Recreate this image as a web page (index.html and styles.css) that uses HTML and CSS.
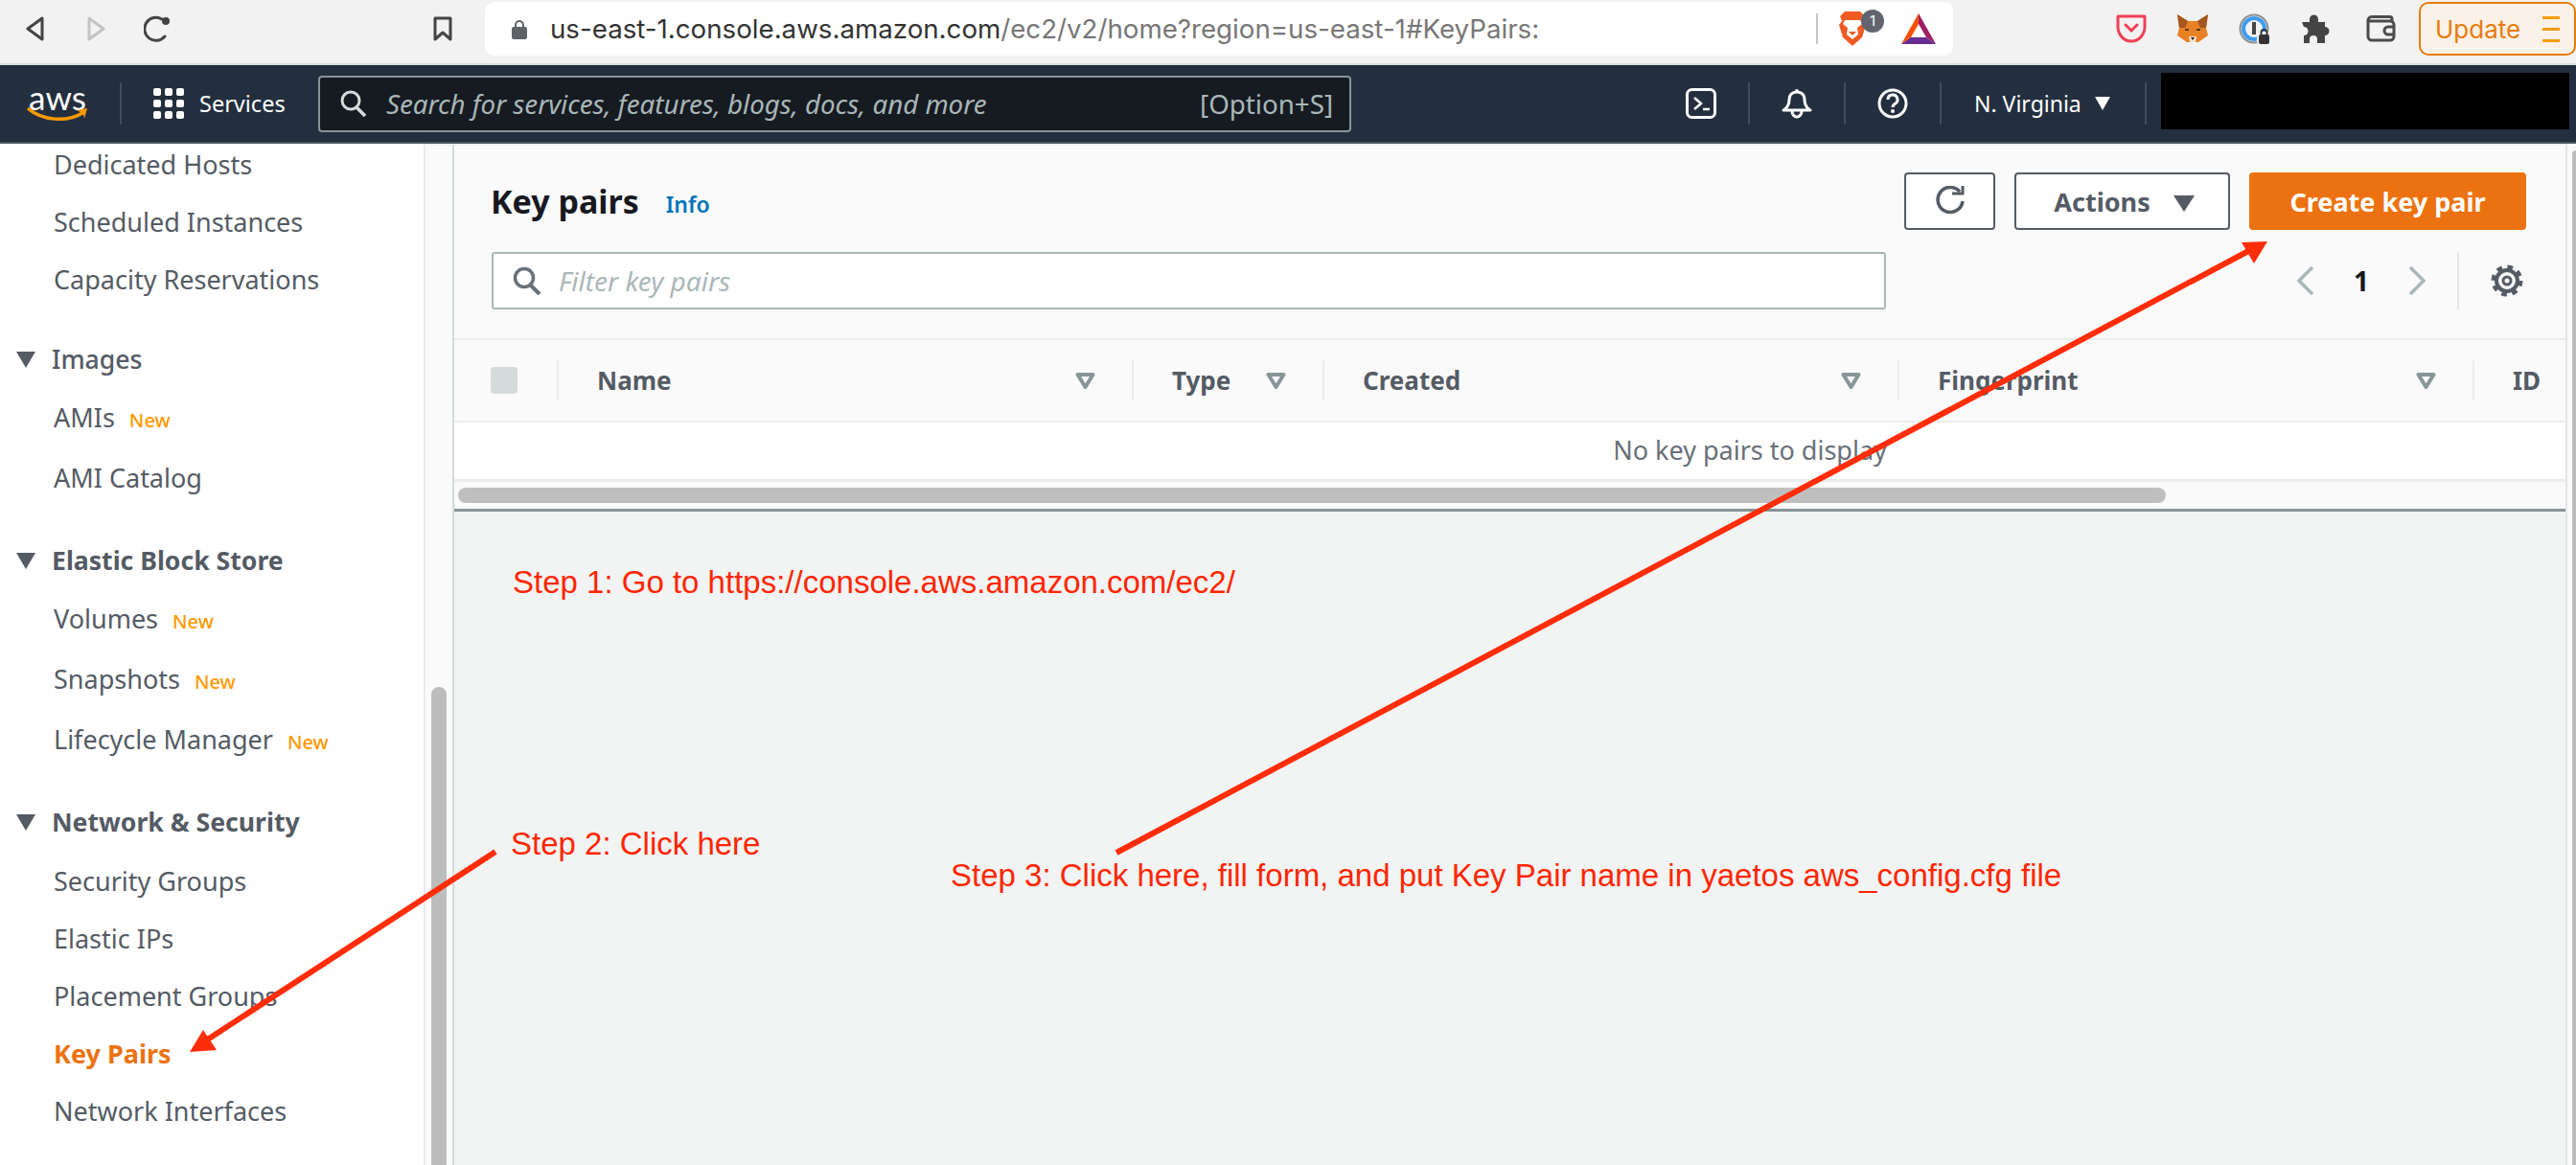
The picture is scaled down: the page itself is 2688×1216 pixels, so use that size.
FILE: index.html
```html
<!DOCTYPE html>
<html>
<head>
    <title>Key pairs | EC2</title>
    <link rel="stylesheet" href="styles.css">
</head>
<body>
    <div class="chrome">
        <svg class="ch-back" width="19" height="26" viewBox="0 0 19 26"><path d="M17 2 L2 13 L17 24 Z" fill="none" stroke="#444" stroke-width="3" stroke-linejoin="round"/></svg>
        <svg class="ch-forward" width="19" height="26" viewBox="0 0 19 26"><path d="M2 2 L17 13 L2 24 Z" fill="none" stroke="#c4c4c4" stroke-width="3" stroke-linejoin="round"/></svg>
        <svg class="ch-reload" width="28" height="28" viewBox="0 0 28 28"><path d="M22 22 A12 12 0 1 1 19 4" fill="none" stroke="#444" stroke-width="3" stroke-linecap="round"/><circle cx="23" cy="6" r="4" fill="#444"/></svg>
        <svg class="ch-bookmark" width="20" height="26" viewBox="0 0 20 26"><path d="M2 2 H18 V24 L10 17 L2 24 Z" fill="none" stroke="#444" stroke-width="3" stroke-linejoin="round"/></svg>
        <div class="urlbar">
            <svg class="lock" width="16" height="21" viewBox="0 0 16 21"><path d="M4 9 V6 a4 4 0 0 1 8 0 V9" fill="none" stroke="#5f6368" stroke-width="2"/><rect x="0" y="8" width="16" height="13" rx="2" fill="#5f6368"/></svg>
            <span class="url"><span class="url-host">us-east-1.console.aws.amazon.com</span>/ec2/v2/home?region=us-east-1#KeyPairs:</span>
            <div class="url-sep"></div>
            <div class="lion">
                <svg width="30" height="36" viewBox="0 0 30 36"><path d="M7 0 H23 L28 5 L26 10 L29 14 L25 27 L15 36 L5 27 L1 14 L4 10 L2 5 Z" fill="#f15a22"/><path d="M7 9 H23 L25 13 L20 17 L21 24 L15 29 L9 24 L10 17 L5 13 Z" fill="#fff"/><path d="M11 21 H19 L15 25 Z" fill="#f15a22"/></svg>
                <span class="lion-badge">1</span>
            </div>
            <svg class="bat" width="36" height="32" viewBox="0 0 36 32"><polygon points="18,0 36,32 26,25 18,11" fill="#9e1f63"/><polygon points="18,0 0,32 10,25 18,11" fill="#ff5000"/><polygon points="10,25 26,25 36,32 0,32" fill="#662d91"/></svg>
        </div>
        <svg class="ext ext-pocket" width="32" height="30" viewBox="0 0 32 30"><path d="M2 2 H30 V13 A14 15 0 0 1 2 13 Z" fill="none" stroke="#ef4056" stroke-width="3" stroke-linejoin="round"/><path d="M10 11 L16 17 L22 11" fill="none" stroke="#ef4056" stroke-width="3" stroke-linecap="round"/></svg>
        <svg class="ext ext-fox" width="32" height="30" viewBox="0 0 32 30"><polygon points="0,0 11,7 21,7 32,0 30,14 32,22 22,29 10,29 0,22 2,14" fill="#e88024"/><polygon points="0,0 11,7 8,14 2,14" fill="#a4561d"/><polygon points="32,0 21,7 24,14 30,14" fill="#a4561d"/><polygon points="12,23 20,23 19,29 13,29" fill="#f3e3d3"/><polygon points="14,24 18,24 16,27" fill="#222"/><rect x="8" y="15" width="4" height="2" fill="#5a3a20"/><rect x="20" y="15" width="4" height="2" fill="#5a3a20"/></svg>
        <svg class="ext ext-onepass" width="32" height="32" viewBox="0 0 32 32"><circle cx="16" cy="16" r="14.5" fill="none" stroke="#8e8e8e" stroke-width="2"/><circle cx="16" cy="16" r="11" fill="none" stroke="#3d9bf0" stroke-width="4"/><rect x="14" y="9" width="4" height="13" fill="#444"/><rect x="19" y="19" width="13" height="13" rx="2" fill="#f2f2f2"/><rect x="21" y="22" width="11" height="10" rx="2" fill="#333"/><path d="M23.5 22 V20 a3 3 0 0 1 6 0 V22" fill="none" stroke="#333" stroke-width="2"/></svg>
        <svg class="ext ext-puzzle" width="30" height="30" viewBox="0 0 30 30"><path d="M0 8 H8 V5 a4.5 4.5 0 0 1 9 0 V8 H24 V13 a4.5 4.5 0 0 1 0 9 V30 H16 V26 a4 4 0 0 0 -8 0 V30 H2 V22 a4.5 4.5 0 0 0 0 -9 Z" fill="#444"/></svg>
        <svg class="ext ext-wallet" width="31" height="28" viewBox="0 0 31 28"><path d="M27 6 V4 a2.5 2.5 0 0 0 -2.5 -2.5 H6 A4 4 0 0 0 2 6 V22 A4 4 0 0 0 6 26 H25 A4 4 0 0 0 29 22 V10 A4 4 0 0 0 25 6 H2" fill="none" stroke="#4a4a4a" stroke-width="3"/><path d="M29 12 H23 a3.5 3.5 0 0 0 0 8 H29" fill="none" stroke="#4a4a4a" stroke-width="3"/></svg>
        <div class="update">
            <span>Update</span>
            <div class="update-menu"><i></i><i></i><i></i></div>
        </div>
    </div>

    <div class="topnav">
        <div class="aws-logo">
            <span class="aws-word">aws</span>
            <svg class="aws-smile" width="64" height="16" viewBox="0 0 64 16"><path d="M1 1 C16 14 42 16 58 6" fill="none" stroke="#f90" stroke-width="3.5"/><path d="M52 3 L63 1 L60 12 C60 8 58 6 52 3 Z" fill="#f90"/></svg>
        </div>
        <div class="nav-sep sep-logo"></div>
        <div class="services">
            <div class="dots"><i></i><i></i><i></i><i></i><i></i><i></i><i></i><i></i><i></i></div>
            <span>Services</span>
        </div>
        <div class="nav-search">
            <svg width="28" height="28" viewBox="0 0 28 28"><circle cx="11" cy="11" r="9" fill="none" stroke="#d5dbdb" stroke-width="3"/><path d="M17 18 L26 27" stroke="#d5dbdb" stroke-width="3.5"/></svg>
            <span class="nav-search-text">Search for services, features, blogs, docs, and more</span>
            <span class="nav-search-key">[Option+S]</span>
        </div>
        <svg class="nav-terminal" width="32" height="32" viewBox="0 0 32 32"><rect x="1.5" y="1.5" width="29" height="29" rx="5" fill="none" stroke="#fff" stroke-width="3"/><path d="M9 10 L16 16 L9 22" fill="none" stroke="#fff" stroke-width="2.5"/><path d="M18 22 H25" stroke="#fff" stroke-width="2.5"/></svg>
        <div class="nav-sep nav-gap"></div>
        <svg class="nav-bell nav-gap" width="32" height="32" viewBox="0 0 32 32"><path d="M2 23 C7 20 8 15 8 12 C8 7 11 4 16 4 C21 4 24 7 24 12 C24 15 25 20 30 23 Z" fill="none" stroke="#fff" stroke-width="3" stroke-linejoin="round"/><circle cx="16" cy="3" r="2" fill="#fff"/><path d="M11 24 a5 6 0 0 0 10 0" fill="none" stroke="#fff" stroke-width="3"/></svg>
        <div class="nav-sep nav-gap"></div>
        <svg class="nav-help nav-gap" width="32" height="32" viewBox="0 0 32 32"><circle cx="16" cy="16" r="14" fill="none" stroke="#fff" stroke-width="3"/><path d="M11 12 a5 5 0 1 1 7.5 4.3 C16.5 17.5 16 18.5 16 20" fill="none" stroke="#fff" stroke-width="3"/><circle cx="16" cy="24" r="2" fill="#fff"/></svg>
        <div class="nav-sep nav-gap"></div>
        <span class="region">N. Virginia</span>
        <div class="region-caret"></div>
        <div class="nav-sep sep-d"></div>
        <div class="account"></div>
    </div>

    <div class="layout">
        <div class="sidebar">
            <a class="side-link">Dedicated Hosts</a>
            <a class="side-link">Scheduled Instances</a>
            <a class="side-link">Capacity Reservations</a>
            <div class="side-head"><i class="caret"></i><span class="side-head-plain">Images</span></div>
            <a class="side-link tall">AMIs <b class="new">New</b></a>
            <a class="side-link tall">AMI Catalog</a>
            <div class="side-head"><i class="caret"></i><span>Elastic Block Store</span></div>
            <a class="side-link tall">Volumes <b class="new">New</b></a>
            <a class="side-link tall">Snapshots <b class="new">New</b></a>
            <a class="side-link tall">Lifecycle Manager <b class="new">New</b></a>
            <div class="side-head side-head-net"><i class="caret"></i><span>Network &amp; Security</span></div>
            <a class="side-link">Security Groups</a>
            <a class="side-link">Elastic IPs</a>
            <a class="side-link">Placement Groups</a>
            <a class="side-link active">Key Pairs</a>
            <a class="side-link">Network Interfaces</a>
        </div>
        <div class="rail"><div class="rail-thumb"></div></div>
        <div class="main">
            <div class="panel">
                <div class="panel-top">
                    <h1>Key pairs</h1>
                    <a class="info">Info</a>
                    <button class="btn btn-icon"><svg width="32" height="32" viewBox="0 0 32 32"><path d="M26 6 A13 13 0 1 0 29 16" fill="none" stroke="#545b64" stroke-width="3.5"/><path d="M18 8 H29 V0" fill="none" stroke="#545b64" stroke-width="3"/></svg></button>
                    <button class="btn btn-actions">Actions <i class="btn-caret"></i></button>
                    <button class="btn btn-create">Create key pair</button>
                </div>
                <div class="panel-filter">
                    <div class="filter">
                        <svg width="30" height="30" viewBox="0 0 30 30"><circle cx="12" cy="12" r="9.5" fill="none" stroke="#687078" stroke-width="3.5"/><path d="M18 19 L28 29" stroke="#687078" stroke-width="4"/></svg>
                        <span>Filter key pairs</span>
                    </div>
                    <div class="pager">
                        <svg width="20" height="32" viewBox="0 0 20 32"><path d="M17 2 L3 16 L17 30" fill="none" stroke="#aab7b8" stroke-width="3.5"/></svg>
                        <span>1</span>
                        <svg width="20" height="32" viewBox="0 0 20 32"><path d="M3 2 L17 16 L3 30" fill="none" stroke="#aab7b8" stroke-width="3.5"/></svg>
                        <div class="pager-sep"></div>
                        <svg width="34" height="34" viewBox="0 0 34 34"><circle cx="17" cy="17" r="11" fill="none" stroke="#545b64" stroke-width="4"/><circle cx="17" cy="17" r="14" fill="none" stroke="#545b64" stroke-width="5" stroke-dasharray="5.5 5.5"/><circle cx="17" cy="17" r="4" fill="none" stroke="#545b64" stroke-width="3"/></svg>
                    </div>
                </div>
                <div class="thead">
                    <div class="th-check"><i></i></div>
                    <div class="th th-name">Name<svg class="sort"><use href="#sort-icon"/></svg></div>
                    <div class="th th-type">Type<svg class="sort"><use href="#sort-icon"/></svg></div>
                    <div class="th th-created">Created<svg class="sort"><use href="#sort-icon"/></svg></div>
                    <div class="th th-finger">Fingerprint<svg class="sort"><use href="#sort-icon"/></svg></div>
                    <div class="th th-id">ID</div>
                </div>
                <div class="empty-row">No key pairs to display</div>
                <div class="hscroll"><div class="hscroll-thumb"></div></div>
            </div>
        </div>
        <div class="edge"><div class="edge-thumb"></div></div>
    </div>

    <svg class="sprite" width="0" height="0"><symbol id="sort-icon" viewBox="0 0 21 17"><path d="M2.5 2 H18.5 L10.5 15 Z" fill="none" stroke="#879596" stroke-width="4" stroke-linejoin="round"/></symbol></svg>

    <!-- red notes drawn over the screenshot -->
    <svg class="arrows" width="2688" height="1216" viewBox="0 0 2688 1216">
        <path d="M1165 890 L2350 260" stroke="#ff2d0a" stroke-width="6"/>
        <polygon points="2366,252 2339,253 2352,275" fill="#ff2d0a"/>
        <path d="M517 889 L212 1088" stroke="#ff2d0a" stroke-width="6"/>
        <polygon points="198,1098 212,1075 226,1096" fill="#ff2d0a"/>
    </svg>
    <div class="note note-1">Step 1: Go to https://console.aws.amazon.com/ec2/</div>
    <div class="note note-2">Step 2: Click here</div>
    <div class="note note-3">Step 3: Click here, fill form, and put Key Pair name in yaetos aws_config.cfg file</div>
</body>
</html>
```

FILE: styles.css
```css
html, body {
    margin: 0;
    padding: 0;
    width: 2688px;
    height: 1216px;
    overflow: hidden;
    background: #f2f3f3;
    font-family: "Noto Sans", Arial, sans-serif;
}

/* browser toolbar */
.chrome {
    height: 60px;
    padding-bottom: 6px;
    background: #f2f2f2;
    border-bottom: 2px solid #d8dcdf;
    display: flex;
    align-items: center;
    font-family: Inter, Arial, sans-serif;
}
.ch-back { margin-left: 27px; }
.ch-forward { margin-left: 45px; }
.ch-reload { margin-left: 40px; }
.ch-bookmark { margin-left: 274px; }
.urlbar {
    margin-left: 34px;
    width: 1532px;
    height: 56px;
    background: #fff;
    border-radius: 10px;
    display: flex;
    align-items: center;
    flex-shrink: 0;
}
.lock { margin-left: 28px; }
.url {
    margin-left: 24px;
    font-size: 27.7px;
    color: #777;
    white-space: nowrap;
}
.url-host { color: #333; }
.url-sep {
    margin-left: auto;
    width: 2px;
    height: 32px;
    background: #c6c6c6;
}
.lion {
    position: relative;
    margin-left: 21px;
    width: 30px;
    height: 36px;
}
.lion-badge {
    position: absolute;
    left: 24px;
    top: -2px;
    width: 24px;
    height: 24px;
    border-radius: 50%;
    background: #62646f;
    color: #fff;
    font-size: 15px;
    line-height: 24px;
    text-align: center;
}
.bat { margin-left: 36px; margin-right: 18px; }
.ext { flex-shrink: 0; }
.ext-pocket { margin-left: 170px; }
.ext-fox { margin-left: 32px; }
.ext-onepass { margin-left: 32px; }
.ext-puzzle { margin-left: 34px; }
.ext-wallet { margin-left: 37px; }
.update {
    margin-left: 24px;
    box-sizing: border-box;
    width: 164px;
    height: 56px;
    flex-shrink: 0;
    border: 2px solid #e87b0c;
    border-radius: 10px;
    background: #fbf1e8;
    color: #e87b0c;
    font-size: 26px;
    display: flex;
    align-items: center;
    padding-left: 15px;
}
.update-menu {
    margin-left: 23px;
    width: 18px;
    display: flex;
    flex-direction: column;
    gap: 9px;
}
.update-menu i {
    display: block;
    height: 3px;
    background: #f39c12;
}

/* aws top bar */
.topnav {
    height: 80px;
    background: #232f3e;
    border-bottom: 2px solid #4a5560;
    display: flex;
    align-items: center;
    color: #fff;
}
.aws-logo {
    margin-left: 28px;
    width: 64px;
    height: 40px;
    display: flex;
    flex-direction: column;
    align-items: center;
    overflow: visible;
}
.aws-word {
    font-family: Lato, Arial, sans-serif;
    font-size: 35px;
    font-weight: 400;
    line-height: 26px;
    height: 24px;
}
.aws-smile { display: block; }
.nav-sep {
    width: 2px;
    height: 44px;
    background: #414d5c;
    flex-shrink: 0;
}
.sep-logo { margin-left: 33px; }
.services {
    margin-left: 33px;
    width: 172px;
    flex-shrink: 0;
    display: flex;
    align-items: center;
    font-size: 23.5px;
}
.dots {
    display: grid;
    grid-template-columns: repeat(3, 8px);
    grid-auto-rows: 8px;
    gap: 4px;
    margin-right: 16px;
}
.dots i {
    display: block;
    background: #fff;
    border-radius: 2px;
}
.nav-search {
    box-sizing: border-box;
    width: 1078px;
    height: 59px;
    flex-shrink: 0;
    background: #161b22;
    border: 2px solid #879596;
    border-radius: 4px;
    display: flex;
    align-items: center;
    padding: 0 17px 0 21px;
    color: #aab7b8;
    font-size: 27.7px;
}
.nav-search-text {
    margin-left: 20px;
    font-style: italic;
}
.nav-search-key { margin-left: auto; }
.nav-terminal { margin-left: 349px; }
.nav-gap { margin-left: 33px; }
.region {
    margin-left: 34px;
    width: 112px;
    flex-shrink: 0;
    white-space: nowrap;
    font-size: 23px;
}
.region-caret {
    margin-left: 14px;
    border-left: 8px solid transparent;
    border-right: 8px solid transparent;
    border-top: 14px solid #fff;
}
.sep-d { margin-left: 36px; }
.account {
    margin-left: 15px;
    margin-bottom: 5px;
    width: 426px;
    height: 59px;
    background: #000;
}

/* page under the bars */
.layout {
    height: 1066px;
    display: flex;
}
.sidebar {
    width: 442px;
    flex-shrink: 0;
    background: #fff;
    border-right: 2px solid #e9ebed;
    padding-top: 3px;
}
.side-link {
    display: block;
    height: 60px;
    line-height: 38px;
    padding-left: 56px;
    font-size: 27px;
    color: #545b64;
    white-space: nowrap;
}
.side-link.tall { height: 63px; }
.side-link.active { color: #ec7211; font-weight: 700; }
.new {
    margin-left: 8px;
    font-size: 20px;
    font-weight: 500;
    color: #f90;
}
.side-head {
    height: 64px;
    margin-top: 20px;
    display: flex;
    align-items: flex-start;
    padding-left: 17px;
    font-size: 26.6px;
    font-weight: 700;
    color: #545b64;
    line-height: 44px;
}
.side-head-net { height: 65px; }
.side-head-plain { font-weight: 500; }
.caret {
    margin-top: 14px;
    margin-right: 17px;
    border-left: 10.5px solid transparent;
    border-right: 10.5px solid transparent;
    border-top: 17px solid #545b64;
}
.rail {
    width: 28px;
    flex-shrink: 0;
    background: #fafafa;
    border-right: 2px solid #d5dbdb;
    border-top: 2px solid #eef0f0;
}
.rail-thumb {
    margin: 565px 0 0 6px;
    width: 16px;
    height: 520px;
    background: #bdbdbd;
    border-radius: 8px;
}
.main {
    width: 2203px;
    flex-shrink: 0;
    border-top: 2px solid #eef0f0;
}
.edge {
    flex: 1;
    border-left: 2px solid #e2e5e6;
    background: #fafafa;
    padding: 7px 0 0 5px;
}
.edge-thumb {
    height: 1100px;
    background: #bdbdbd;
    border-radius: 6px 0 0 6px;
}

/* key pairs panel */
.panel {
    background: #fafafa;
    border-bottom: 3px solid #879596;
}
.panel-top {
    height: 60px;
    padding: 28px 41px 0 38px;
    display: flex;
    align-items: center;
}
h1 {
    margin: 0;
    font-size: 34px;
    font-weight: 700;
    color: #16191f;
    line-height: 60px;
}
.info {
    margin-left: 28px;
    margin-top: 5px;
    font-size: 23px;
    font-weight: 600;
    color: #0073bb;
}
.btn {
    box-sizing: border-box;
    height: 60px;
    border-radius: 4px;
    font-family: "Noto Sans", Arial, sans-serif;
    font-size: 27px;
    font-weight: 700;
    background: #fff;
    color: #545b64;
    border: 2px solid #545b64;
    padding: 0;
}
.btn-icon {
    margin-left: auto;
    width: 95px;
    display: flex;
    align-items: center;
    justify-content: center;
}
.btn-actions {
    margin-left: 20px;
    width: 225px;
    padding-left: 4px;
}
.btn-caret {
    display: inline-block;
    margin-left: 17px;
    border-left: 11px solid transparent;
    border-right: 11px solid transparent;
    border-top: 17px solid #545b64;
}
.btn-create {
    margin-left: 20px;
    width: 289px;
    background: #ec7211;
    border-color: #ec7211;
    color: #fff;
}
.panel-filter {
    height: 60px;
    margin-top: 23px;
    padding-left: 39px;
    display: flex;
    align-items: center;
}
.filter {
    box-sizing: border-box;
    width: 1455px;
    height: 60px;
    background: #fff;
    border: 2px solid #aab7b8;
    border-radius: 3px;
    display: flex;
    align-items: center;
    padding-left: 20px;
    font-size: 28px;
    font-style: italic;
    color: #aab7b8;
}
.filter span { margin-left: 18px; }
.pager {
    margin-left: 428px;
    display: flex;
    align-items: center;
    font-size: 28px;
    font-weight: 700;
    color: #16191f;
}
.pager span { margin: 0 40px; }
.pager-sep {
    margin: 0 33px 0 32px;
    width: 2px;
    height: 60px;
    background: #e4e8e8;
}
.thead {
    margin-top: 30px;
    height: 84px;
    border-top: 2px solid #eaeded;
    border-bottom: 2px solid #eaeded;
    display: grid;
    grid-template-columns: 107px 600px 199px 600px 600px 1fr;
    align-items: center;
}
.th-check { padding-left: 38px; }
.th-check i {
    display: block;
    width: 28px;
    height: 28px;
    border-radius: 4px;
    background: #d5dbdb;
}
.th {
    height: 42px;
    border-left: 2px solid #eaeded;
    padding-left: 40px;
    padding-right: 38px;
    display: flex;
    align-items: center;
    justify-content: space-between;
    font-size: 26px;
    font-weight: 700;
    color: #545b64;
}
.sort { width: 21px; height: 17px; }
.sprite { position: absolute; }
.empty-row {
    box-sizing: border-box;
    height: 62px;
    background: #fff;
    border-bottom: 3px solid #eaeded;
    text-align: center;
    line-height: 58px;
    font-size: 27px;
    color: #687078;
    padding-left: 501px;
}
.hscroll {
    height: 28px;
    padding: 6px 0 0 4px;
    box-sizing: border-box;
}
.hscroll-thumb {
    width: 1782px;
    height: 16px;
    border-radius: 8px;
    background: #bfbfbf;
}

/* annotations */
.arrows {
    position: absolute;
    left: 0;
    top: 0;
}
.note {
    position: absolute;
    font-family: "Liberation Sans", Arial, sans-serif;
    font-size: 33px;
    line-height: 38px;
    color: #ff2600;
    white-space: nowrap;
}
.note-1 { left: 535px; top: 589px; }
.note-2 { left: 533px; top: 862px; }
.note-3 { left: 992px; top: 895px; }
```
